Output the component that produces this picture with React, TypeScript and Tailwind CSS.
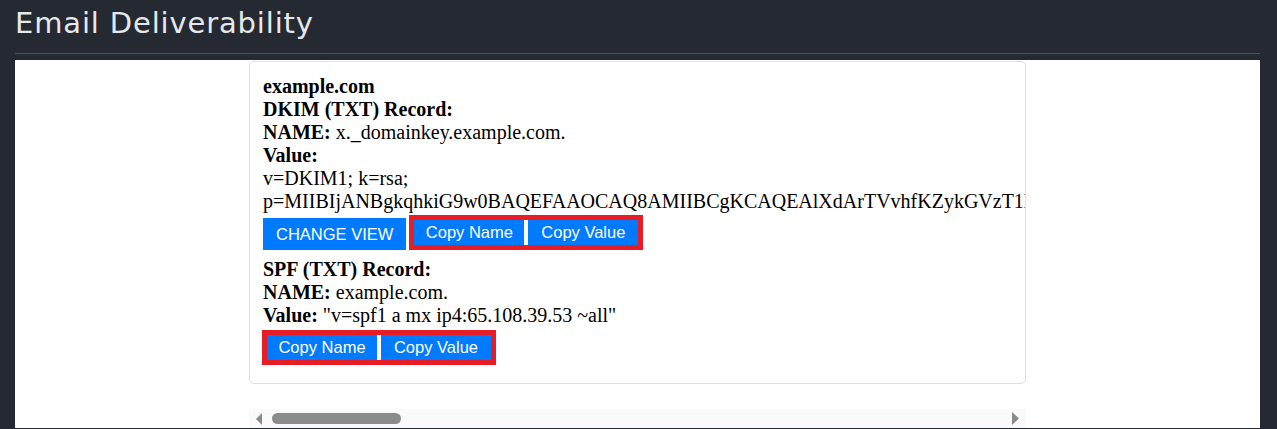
import React from "react";

const dkimKey =
  "p=MIIBIjANBgkqhkiG9w0BAQEFAAOCAQ8AMIIBCgKCAQEAlXdArTVvhfKZykGVzT1lQm8Yb3rPqW2xJcN7kT0sHdLgF4vE9uR6aZiBwC5yOeMnS";

function CopyGroup() {
  return (
    <div className="flex gap-[4px] border-[5px] border-[#e81c24] bg-white">
      <button className="h-[25px] w-[110px] bg-[#007bff] text-[16.5px] leading-none text-white">
        Copy Name
      </button>
      <button className="h-[25px] w-[110px] bg-[#007bff] text-[16.5px] leading-none text-white">
        Copy Value
      </button>
    </div>
  );
}

export default function App() {
  return (
    <div className="min-h-screen bg-[#252932] px-[15px] pr-[17px]">
      <h1 className="pt-[2px] font-['DejaVu_Sans',sans-serif] text-[29px] leading-[42px] tracking-[0.85px] font-normal text-[#e6e8eb]">
        Email Deliverability
      </h1>
      <div className="mt-[9px] h-px bg-[#4c505a]" />
      <div className="mt-[6px] h-[368px] bg-white pt-px">
        <div className="mx-auto w-[777px]">
          <div className="overflow-hidden rounded-[5px] border border-[#dcdfe3] px-[13px] pt-[13px] pb-[18px] font-['Liberation_Serif',serif] text-[20px] leading-[23px] text-black">
            <div className="font-bold">example.com</div>
            <div className="font-bold">DKIM (TXT) Record:</div>
            <div>
              <b>NAME:</b> x._domainkey.example.com.
            </div>
            <div className="font-bold">Value:</div>
            <div>
              v=DKIM1; k=rsa; {dkimKey}
            </div>
            <div className="mt-[2px] flex items-end gap-[3px] font-['Liberation_Sans',sans-serif]">
              <button className="h-[32px] bg-[#007bff] px-[13px] text-[16.5px] text-white">
                CHANGE VIEW
              </button>
              <CopyGroup />
            </div>
            <div className="mt-[8px] font-bold">SPF (TXT) Record:</div>
            <div>
              <b>NAME:</b> example.com.
            </div>
            <div>
              <b>Value:</b> "v=spf1 a mx ip4:65.108.39.53 ~all"
            </div>
            <div className="mt-[3px] -ml-px flex font-['Liberation_Sans',sans-serif]">
              <CopyGroup />
            </div>
          </div>
          <div className="mt-[25px] flex h-[19px] items-center bg-[#fafafa] pl-[7px] pr-[7px]">
            <svg width="6" height="12" viewBox="0 0 6 12" className="shrink-0">
              <path d="M6 0 L0 6 L6 12 Z" fill="#8a8a8a" />
            </svg>
            <div className="ml-[10px] h-[11px] w-[129px] rounded-full bg-[#8c8c8c]" />
            <div className="flex-1" />
            <svg width="7" height="13" viewBox="0 0 7 13" className="shrink-0">
              <path d="M0 0 L7 6.5 L0 13 Z" fill="#8a8a8a" />
            </svg>
          </div>
        </div>
      </div>
    </div>
  );
}
